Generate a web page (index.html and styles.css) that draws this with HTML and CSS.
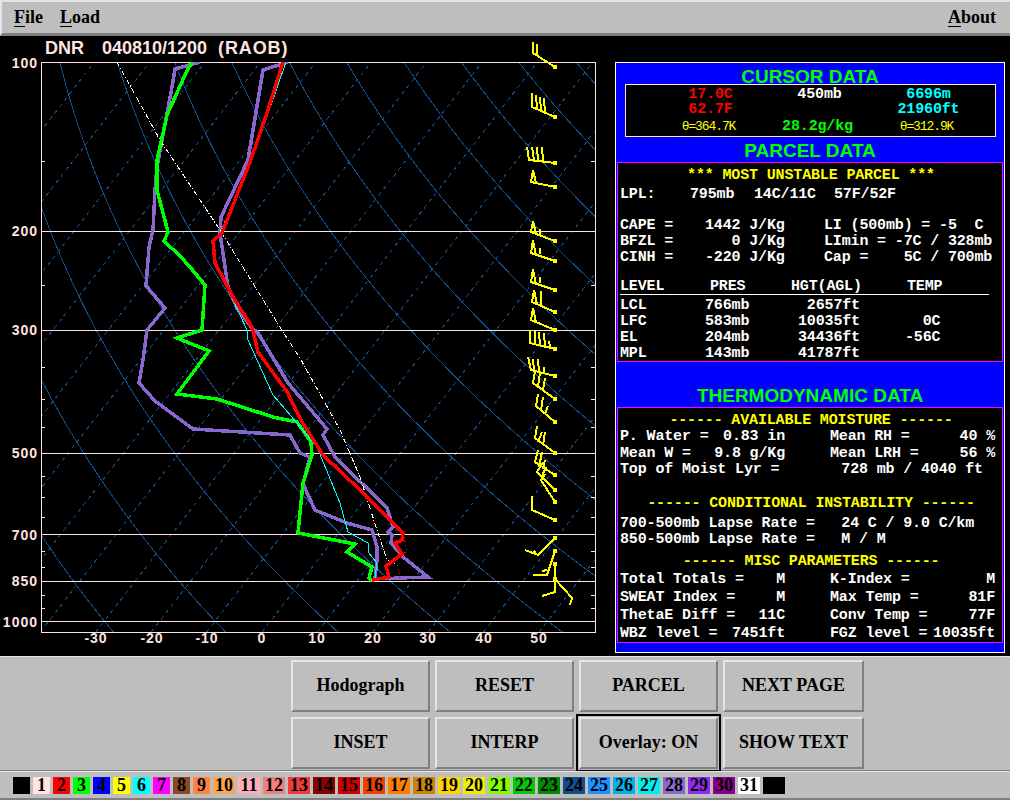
FILE: index.html
```html
<!DOCTYPE html>
<html lang="en">
<head>
<meta charset="utf-8">
<title>NSHARP sounding</title>
<link rel="stylesheet" href="styles.css">
</head>
<body>
<header class="menubar">
  <nav class="menu-left"><span class="menu-item"><u>F</u>ile</span><span class="menu-item"><u>L</u>oad</span></nav>
  <span class="menu-item"><u>A</u>bout</span>
</header>
<main class="main">
  <svg class="chart" viewBox="0 36 610 620" width="610" height="620" xmlns="http://www.w3.org/2000/svg">
    <defs><clipPath id="plot"><rect x="41" y="62" width="554" height="570"/></clipPath></defs>
    <text class="title" y="54"><tspan x="45">DNR</tspan><tspan x="102">040810/1200</tspan><tspan class="title-src" x="218">(RAOB)</tspan></text>
    <g id="grid" clip-path="url(#plot)"></g>
    <path class="frame" d="M41.5 62.5H595.5V632.5H41.5Z M41 231.5H595 M41 330.5H595 M41 453.5H595 M41 534.5H595 M41 581.5H595 M41 621.5H595"/>
    <path class="frame" d="M41 161.5h4M591 161.5h4M41 285.5h4M591 285.5h4M41 367.5h4M591 367.5h4M41 399.5h4M591 399.5h4M41 427.5h4M591 427.5h4M41 476.5h4M591 476.5h4M41 497.5h4M591 497.5h4M41 517.5h4M591 517.5h4M41 551.5h4M591 551.5h4M41 567.5h4M591 567.5h4M41 595.5h4M591 595.5h4M41 608.5h4M591 608.5h4"/>
    <g class="axis axis-left">
      <text x="38" y="68">100</text><text x="38" y="236">200</text><text x="38" y="335">300</text><text x="38" y="458">500</text><text x="38" y="540">700</text><text x="38" y="586">850</text><text x="38" y="627">1000</text>
    </g>
    <g class="axis axis-bottom">
      <text x="96" y="643">-30</text><text x="152" y="643">-20</text><text x="207" y="643">-10</text><text x="262" y="643">0</text><text x="317" y="643">10</text><text x="373" y="643">20</text><text x="428" y="643">30</text><text x="484" y="643">40</text><text x="539" y="643">50</text>
    </g>
    <g clip-path="url(#plot)">
      <polyline class="trace purple" points="200,62 175,69 172,87 157,167 155,190 153,230 149,247 146,286 165,308 147,330 143,360 139,383 155,401 193,429 290,435 300,453 310,457 303,484 315,510 347,523 372,530 377,547 377,560 375,578"/>
      <polyline class="trace purple" points="288,62 263,70 248,160 221,217 220,233 228,287 237,308 252,328 258,333 288,383 327,429 323,435 335,457 387,508 393,527 388,532 392,535 391,543 403,557 428,577 373,579"/>
      <polyline class="parcel" points="117,62 160,140 220,230 283,332 300,358 340,430 360,477 377,530 387,560 397,565"/>
      <polyline class="trace green" points="192,62 185,75 167,115 157,160 157,190 168,232 164,241 180,256 190,267 205,285 202,330 177,338 209,351 177,394 217,399 273,417 297,422 311,442 312,455 303,483 298,533 355,544 347,552 372,567 369,578 372,581"/>
      <polyline class="thin" points="286,62 253,157 220,233 213,242 213,262 227,287 247,330 248,340 273,395 297,423 317,447 340,503 348,532 368,543 368,552 377,563 375,578"/>
      <polyline class="trace red" points="283,62 267,113 250,162 222,233 213,241 215,263 233,297 252,327 258,352 288,393 290,398 302,422 323,455 360,490 403,533 402,540 395,543 402,554 386,566 389,577 372,580"/>
      <polyline class="red-dots" points="403,533 407,550 397,563 400,578"/>
    </g>
    <g class="barbs">
      <path d="M555 67L533 53V42M537 55V44"/>
      <path d="M555 117L532 107V93M541 111L540 97M545 113L544 98M537 109L536 95"/>
      <path d="M555 163L529 160L527 147M534 160L532 147M538 161L537 147M543 161L542 147"/>
      <path d="M555 187L531 182L533 170L536 183"/>
      <path d="M555 241L531 232L533 221L536 234M540 235V229"/>
      <path d="M555 261L531 253L533 240L536 255M540 254V248"/>
      <path d="M555 290L531 282L533 269L536 284M540 283V277"/>
      <path d="M555 312L532 302L534 290L537 304M541 305V291"/>
      <path d="M555 330L531 320L533 308L536 322"/>
      <path d="M555 349L530 343V330M535 344V331M540 345L539 332M545 346L544 333M550 347L549 341"/>
      <path d="M555 376L531 370L528 357M534 371L533 359M539 372L538 359M544 373V367"/>
      <path d="M555 399L533 383L535 371M538 386L540 373M543 390L545 378"/>
      <path d="M555 422L536 406L538 394M541 410L543 397M545 414L548 406"/>
      <path d="M555 453L535 438L537 426M538 442L542 432M543 445L545 432"/>
      <path d="M555 475L535 462L538 450M539 467L542 452M543 469L545 460"/>
      <path d="M555 490L537 472L543 462M542 476L546 467"/>
      <path d="M555 502L541 480L545 474"/>
      <path d="M555 520L532 510V496"/>
      <path d="M555 538L538 555L525 550M536 553L534 551"/>
      <path d="M555 551L547 575H533M547 570L542 571"/>
      <path d="M555 564V592L542 596"/>
      <path d="M555 579L572 598L570 605"/>
      <path class="dots" d="M553 67h4M553 117h4M553 163h4M553 187h4M553 241h4M553 261h4M553 290h4M553 312h4M553 330h4M553 349h4M553 376h4M553 399h4M553 422h4M553 453h4M553 475h4M553 490h4M553 502h4M553 520h4M553 538h4M553 551h4M553 564h4M553 579h4"/>
    </g>
  </svg>
  <aside class="data">
    <h2 class="heading heading-cursor">CURSOR DATA</h2>
    <section class="cursor">
      <div class="cursor-row"><span class="red-t">17.0C</span><span class="white-t">450mb</span><span class="cyan-t">6696m</span></div>
      <div class="cursor-row"><span class="red-t">62.7F</span><span></span><span class="cyan-t">21960ft</span></div>
      <div class="cursor-row cursor-last"><span class="theta">θ=364.7K</span><span class="green-t">28.2g/kg</span><span class="theta">θ=312.9K</span></div>
    </section>
    <h2 class="heading heading-parcel">PARCEL DATA</h2>
    <section class="box box-parcel">
      <div class="row center yellow-t">*** MOST UNSTABLE PARCEL ***</div>
      <div class="row lpl gap-s"><span>LPL:</span><span>795mb</span><span>14C/11C</span><span>57F/52F</span></div>
      <div class="row tri gap-m"><span>CAPE =</span><span>1442 J/Kg</span><span>LI (500mb) = -5  C</span></div>
      <div class="row tri"><span>BFZL =</span><span>   0 J/Kg</span><span>LImin = -7C / 328mb</span></div>
      <div class="row tri"><span>CINH =</span><span>-220 J/Kg</span><span>Cap =    5C / 700mb</span></div>
      <div class="row thead gap-h"><span>LEVEL</span><span>PRES</span><span>HGT(AGL)</span><span>TEMP</span></div>
      <div class="rule"></div>
      <div class="row tbody"><span>LCL</span><span>766mb</span><span> 2657ft</span><span></span></div>
      <div class="row tbody"><span>LFC</span><span>583mb</span><span>10035ft</span><span>  0C</span></div>
      <div class="row tbody"><span>EL</span><span>204mb</span><span>34436ft</span><span>-56C</span></div>
      <div class="row tbody"><span>MPL</span><span>143mb</span><span>41787ft</span><span></span></div>
    </section>
    <h2 class="heading heading-thermo">THERMODYNAMIC DATA</h2>
    <section class="box box-thermo">
      <div class="row center yellow-t">------ AVAILABLE MOISTURE ------</div>
      <div class="row duo"><div class="kv"><span>P. Water =</span><span>0.83 in</span></div><div class="kv"><span>Mean RH =</span><span>40 %</span></div></div>
      <div class="row duo gap-x"><div class="kv"><span>Mean W =</span><span>9.8 g/Kg</span></div><div class="kv"><span>Mean LRH =</span><span>56 %</span></div></div>
      <div class="row">Top of Moist Lyr =       728 mb / 4040 ft</div>
      <div class="row center yellow-t gap-l">------ CONDITIONAL INSTABILITY ------</div>
      <div class="row gap-n">700-500mb Lapse Rate =   24 C / 9.0 C/km</div>
      <div class="row">850-500mb Lapse Rate =   M / M</div>
      <div class="row center yellow-t gap-n2">------ MISC PARAMETERS ------</div>
      <div class="row duo gap-n3"><div class="kv"><span>Total Totals =</span><span>M</span></div><div class="kv"><span>K-Index =</span><span>M</span></div></div>
      <div class="row duo gap-x2"><div class="kv"><span>SWEAT Index =</span><span>M</span></div><div class="kv"><span>Max Temp =</span><span>81F</span></div></div>
      <div class="row duo gap-x2"><div class="kv"><span>ThetaE Diff =</span><span>11C</span></div><div class="kv"><span>Conv Temp =</span><span>77F</span></div></div>
      <div class="row duo gap-x2"><div class="kv"><span>WBZ level =</span><span>7451ft</span></div><div class="kv"><span>FGZ level =</span><span>10035ft</span></div></div>
    </section>
  </aside>
</main>
<section class="controls">
  <div class="button-grid">
    <button class="btn">Hodograph</button>
    <button class="btn">RESET</button>
    <button class="btn">PARCEL</button>
    <button class="btn">NEXT PAGE</button>
    <button class="btn">INSET</button>
    <button class="btn">INTERP</button>
    <button class="btn btn-active">Overlay: ON</button>
    <button class="btn">SHOW TEXT</button>
  </div>
</section>
<footer class="palette">
  <span class="sw c0"></span><span class="sw c1">1</span><span class="sw c2">2</span><span class="sw c3">3</span><span class="sw c4">4</span><span class="sw c5">5</span><span class="sw c6">6</span><span class="sw c7">7</span><span class="sw c8">8</span><span class="sw c9">9</span><span class="sw w c10">10</span><span class="sw w c11">11</span><span class="sw w c12">12</span><span class="sw w c13">13</span><span class="sw w c14">14</span><span class="sw w c15">15</span><span class="sw w c16">16</span><span class="sw w c17">17</span><span class="sw w c18">18</span><span class="sw w c19">19</span><span class="sw w c20">20</span><span class="sw w c21">21</span><span class="sw w c22">22</span><span class="sw w c23">23</span><span class="sw w c24">24</span><span class="sw w c25">25</span><span class="sw w c26">26</span><span class="sw w c27">27</span><span class="sw w c28">28</span><span class="sw w c29">29</span><span class="sw w c30">30</span><span class="sw w c31">31</span><span class="sw w c0"></span>
</footer>
<script src="chart.js"></script>
</body>
</html>
```
FILE: styles.css
```css
* { box-sizing: border-box; }
html, body { margin: 0; padding: 0; }
body { width: 1010px; height: 800px; overflow: hidden; background: #bebebe; display: flex; flex-direction: column; font-family: "Liberation Serif", serif; color: #000; }

.menubar { height: 36px; flex: none; display: flex; justify-content: space-between; align-items: center; padding: 0 14px 2px 12px; background: #bebebe; border-top: 2px solid #e5e5e5; border-left: 2px solid #e5e5e5; border-bottom: 3px solid #7f7f7f; }
.menu-left { display: flex; gap: 17px; }
.menu-item { font: bold 18px/22px "Liberation Serif", serif; }
.menu-item u { text-underline-offset: 3px; }

.main { height: 620px; flex: none; display: flex; background: #000; }
.chart { display: block; flex: none; }
.title { font: bold 18px "Liberation Sans", sans-serif; fill: #ffe4e1; }
.title-src { letter-spacing: 0.9px; }
.frame { fill: none; stroke: #ffe4e1; stroke-width: 1; shape-rendering: crispEdges; }
.axis text { font: bold 14px "Liberation Sans", sans-serif; fill: #ffe4e1; letter-spacing: 1px; }
.axis-left text { text-anchor: end; }
.axis-bottom text { text-anchor: middle; }
.iso { stroke: #104e8b; stroke-width: 1; stroke-dasharray: 4 4; fill: none; shape-rendering: crispEdges; }
.adiabat { stroke: #104e8b; stroke-width: 1; fill: none; shape-rendering: crispEdges; }
.trace { fill: none; stroke-width: 3.5; stroke-linejoin: miter; shape-rendering: crispEdges; }
.purple { stroke: #8968cd; }
.green { stroke: #00ff00; }
.red { stroke: #ff0000; }
.thin { fill: none; stroke: #00ffff; stroke-width: 1; shape-rendering: crispEdges; }
.parcel { fill: none; stroke: #fff; stroke-width: 1; stroke-dasharray: 5 2 1 2; shape-rendering: crispEdges; }
.red-dots { fill: none; stroke: #ff0000; stroke-width: 1; stroke-dasharray: 1 3; shape-rendering: crispEdges; }
.barbs path { fill: none; stroke: #ffff00; stroke-width: 2; shape-rendering: crispEdges; }
.barbs .dots { stroke-width: 4; }

.data { width: 390px; height: 591px; margin: 26px 0 0 5px; flex: none; background: #0000ff; border: 1px solid #fff; font: bold 15px "Liberation Mono", monospace; color: #fff; }
.heading { margin: 0; text-align: center; color: #00ff00; font: bold 19px/21px "Liberation Sans", sans-serif; }
.heading-cursor { height: 21px; padding-top: 3px; }
.heading-parcel { height: 25px; padding-top: 3px; }
.heading-thermo { height: 45px; padding-top: 23px; }
.cursor { width: 371px; height: 53px; margin-left: 9px; padding-top: 2px; background: #000; border: 1px solid #ffe4e1; }
.cursor-row { height: 15px; line-height: 15px; padding-left: 30px; display: grid; grid-template-columns: 109px 109px 109px; text-align: center; white-space: pre; letter-spacing: -0.15px; }
.cursor-last { margin-top: 2px; height: 16px; line-height: 16px; padding-left: 28px; }
.red-t { color: #ff0000; }
.white-t { color: #fff; }
.cyan-t { color: #00ffff; }
.green-t { color: #00ff00; }
.yellow-t { color: #ffff00; }
.theta { color: #ffff00; font-size: 13px; font-weight: normal; letter-spacing: -1.1px; }
.box { width: 386px; margin-left: 1px; background: #000; border: 1px solid #ff00ff; padding: 5px 0 0 2px; }
.box-parcel { height: 200px; }
.box-thermo { height: 236px; }
.row { height: 16px; line-height: 16px; white-space: pre; letter-spacing: -0.15px; }
.center { text-align: center; }
.lpl { display: grid; grid-template-columns: 70px 64px 80px 1fr; }
.tri { display: grid; grid-template-columns: 85px 119px 1fr; }
.thead { display: grid; grid-template-columns: 90px 81px 116px 1fr; }
.tbody { display: grid; grid-template-columns: 85px 93px 107px 1fr; }
.duo { display: grid; grid-template-columns: 165px 165px; column-gap: 45px; }
.kv { display: flex; justify-content: space-between; }
.gap-s { margin-top: 3px; }
.gap-m { margin-top: 15px; }
.gap-h { margin-top: 13px; }
.rule { height: 1px; width: 369px; margin: -1px 0 3px; background: #fff; }
.gap-x { margin-top: 1px; }
.gap-l { margin-top: 18px; }
.gap-n { margin-top: 4px; }
.gap-n2 { margin-top: 6px; }
.gap-n3 { margin-top: 2px; }
.gap-x2 { margin-top: 2px; }

.controls { height: 115px; flex: none; padding: 3px 0 0 291px; border-top: 1px solid #e5e5e5; border-bottom: 1px solid #7f7f7f; background: #bebebe; }
.button-grid { display: grid; grid-template-columns: 139px 139px 139px 141px; grid-auto-rows: 52px; column-gap: 5px; row-gap: 5px; }
.btn { margin: 0; padding: 0 0 2px; background: #bebebe; border: 2px solid; border-color: #e5e5e5 #7f7f7f #7f7f7f #e5e5e5; font: bold 18px "Liberation Serif", serif; color: #000; }
.btn-active { outline: 2px solid #000; outline-offset: 1px; }

.palette { height: 29px; flex: none; display: flex; gap: 3px; padding: 5px 0 0 13px; background: #bebebe; border-top: 1px solid #e5e5e5; border-bottom: 2px solid #7f7f7f; }
.sw { width: 17px; height: 17px; font: bold 18px/17px "Liberation Serif", serif; text-align: center; color: #000; }
.sw.w { width: 22px; }
.c0 { background: #000; }
.c1 { background: #ffe4e1; }
.c2 { background: #ff0000; }
.c3 { background: #00ff00; }
.c4 { background: #0000ff; }
.c5 { background: #ffff00; }
.c6 { background: #00ffff; }
.c7 { background: #ff00ff; }
.c8 { background: #8b4726; }
.c9 { background: #ff8247; }
.c10 { background: #ffa54f; }
.c11 { background: #ffaeb9; }
.c12 { background: #f08080; }
.c13 { background: #ee3b3b; }
.c14 { background: #8b0000; }
.c15 { background: #cd0000; }
.c16 { background: #ee4000; }
.c17 { background: #ff7f00; }
.c18 { background: #cd8500; }
.c19 { background: #ffd700; }
.c20 { background: #eeee00; }
.c21 { background: #7fff00; }
.c22 { background: #00cd00; }
.c23 { background: #008b00; }
.c24 { background: #104e8b; }
.c25 { background: #1e90ff; }
.c26 { background: #00b2ee; }
.c27 { background: #00eeee; }
.c28 { background: #8968cd; }
.c29 { background: #912cee; }
.c30 { background: #8b008b; }
.c31 { background: #fff; }
```
FILE: chart.js
```js
// Skew-T background: isotherms and dry adiabats computed from the axis scales.
(function () {
  var NS = "http://www.w3.org/2000/svg";
  var grid = document.getElementById("grid");
  var PX_PER_C = 5.54, SKEW = 0.775, X0 = 262, Y_BOTTOM = 632, Y_TOP = 62, Y_1000 = 621, DECADE = 559;

  function add(cls, pts) {
    var el = document.createElementNS(NS, "polyline");
    el.setAttribute("class", cls);
    el.setAttribute("points", pts.join(" "));
    grid.appendChild(el);
  }
  function xAt(t, y) { return X0 + PX_PER_C * t + SKEW * (Y_BOTTOM - y); }

  for (var t = -130; t <= 50; t += 10) {
    add("iso", [xAt(t, Y_BOTTOM) + "," + Y_BOTTOM, xAt(t, Y_TOP) + "," + Y_TOP]);
  }
  for (var c = -30; c <= 250; c += 20) {
    var pts = [];
    for (var y = Y_TOP; y <= Y_BOTTOM; y += 6) {
      var pRatio = Math.pow(10, -(Y_1000 - y) / DECADE);
      var temp = (c + 273.15) * Math.pow(pRatio, 0.286) - 273.15;
      pts.push(xAt(temp, y).toFixed(1) + "," + y);
    }
    add("adiabat", pts);
  }
})();
```
